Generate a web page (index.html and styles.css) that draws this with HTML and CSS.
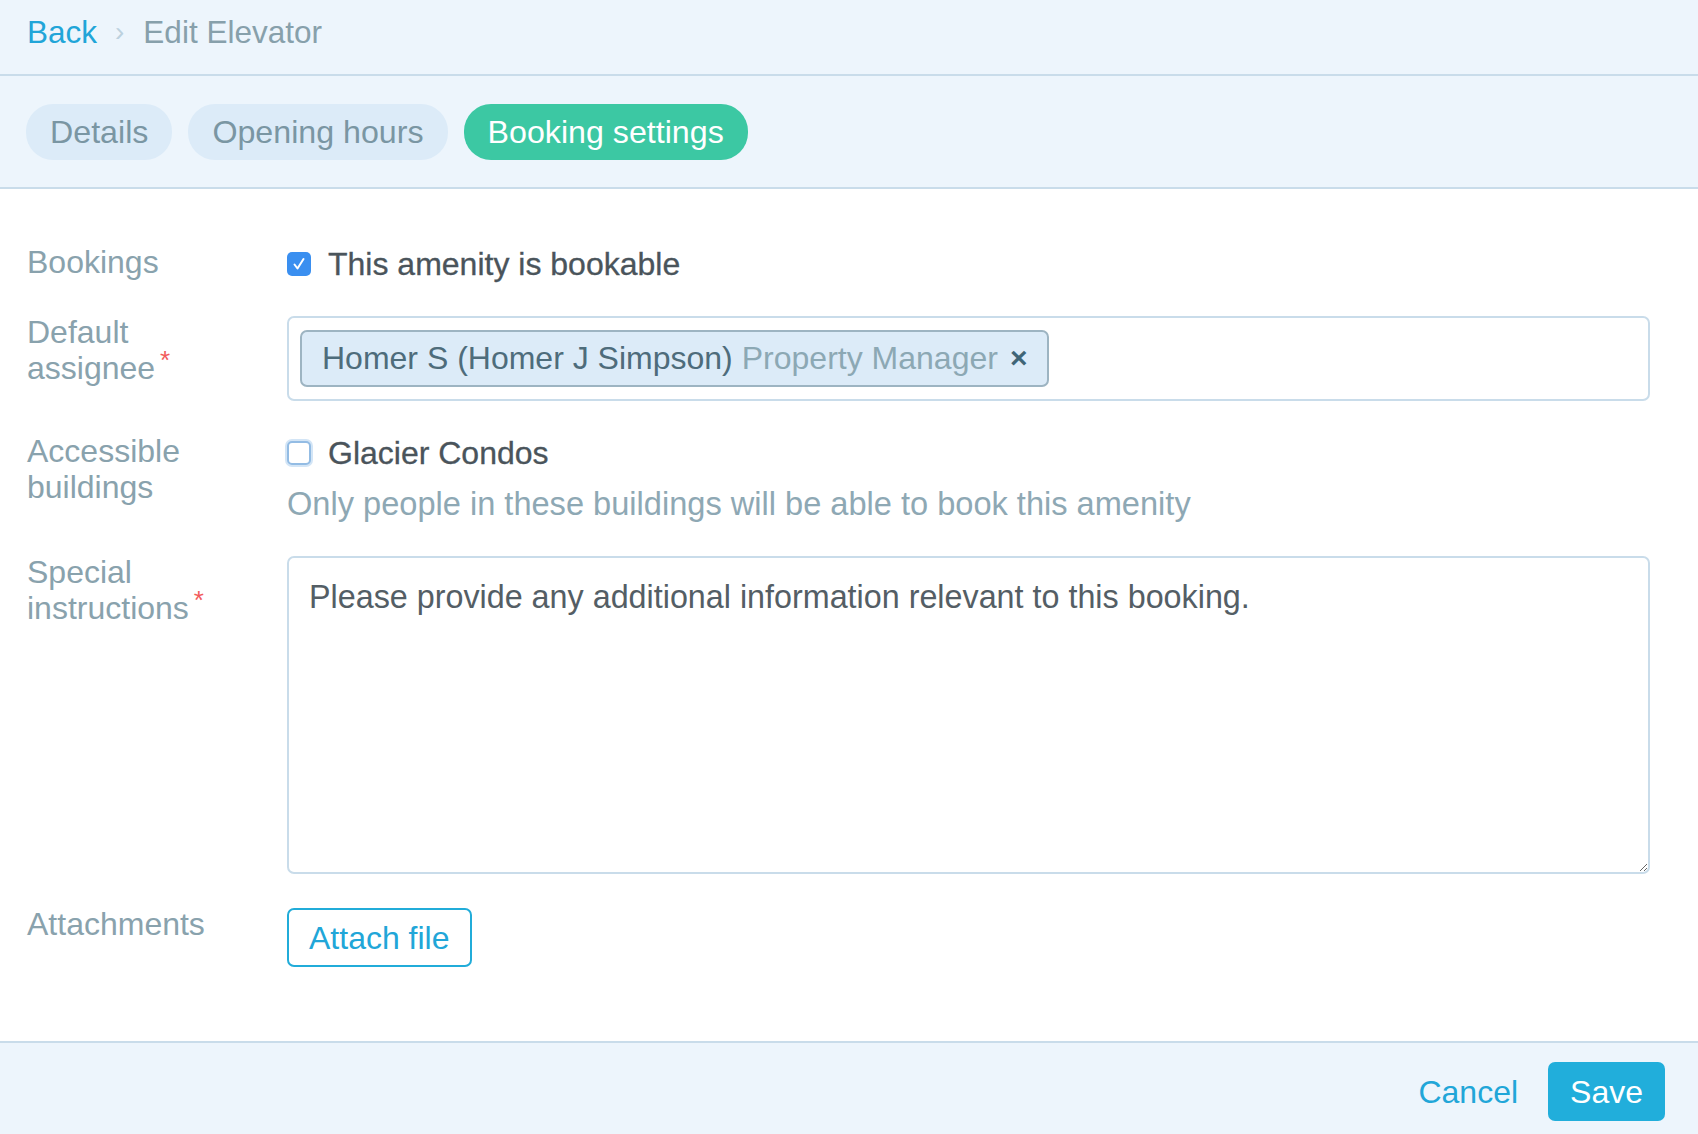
FILE: index.html
```html
<!DOCTYPE html>
<html lang="en">
<head>
<meta charset="utf-8">
<title>Edit Elevator</title>
<link rel="stylesheet" href="styles.css">
</head>
<body>
<div class="page">
  <header class="crumbs">
    <a class="crumb-back" href="#">Back</a>
    <span class="crumb-sep">›</span>
    <span class="crumb-title">Edit Elevator</span>
  </header>

  <nav class="tabs">
    <span class="tab">Details</span>
    <span class="tab">Opening hours</span>
    <span class="tab tab-active">Booking settings</span>
  </nav>

  <main class="form">
    <div class="label">Bookings</div>
    <div class="control">
      <div class="check">
        <span class="box box-checked">
          <svg viewBox="0 0 24 24" width="24" height="24"><path d="M7.5 12.5 L10.5 16.5 L16.5 7" fill="none" stroke="#fff" stroke-width="2" stroke-linecap="round" stroke-linejoin="round"/></svg>
        </span>
        <span class="check-text">This amenity is bookable</span>
      </div>
    </div>

    <div class="label">Default<br>assignee<span class="req">*</span></div>
    <div class="control">
      <div class="token-input">
        <span class="token">
          <span class="token-name">Homer S (Homer J Simpson)</span>
          <span class="token-role">Property Manager</span>
          <span class="token-x">×</span>
        </span>
      </div>
    </div>

    <div class="label">Accessible<br>buildings</div>
    <div class="control">
      <div class="check">
        <span class="box box-empty"></span>
        <span class="check-text">Glacier Condos</span>
      </div>
      <p class="help">Only people in these buildings will be able to book this amenity</p>
    </div>

    <div class="label">Special<br>instructions<span class="req">*</span></div>
    <div class="control">
      <textarea class="textarea">Please provide any additional information relevant to this booking.</textarea>
    </div>

    <div class="label">Attachments</div>
    <div class="control">
      <button class="btn-outline" type="button">Attach file</button>
    </div>
  </main>

  <footer class="actions">
    <a class="cancel" href="#">Cancel</a>
    <button class="btn-save" type="button">Save</button>
  </footer>
</div>
</body>
</html>
```
FILE: styles.css
```css
* { box-sizing: border-box; }

html, body {
  margin: 0;
  padding: 0;
  height: 100%;
}

body {
  font-family: "Liberation Sans", Arial, Helvetica, sans-serif;
  font-size: 32px;
  line-height: 36px;
  color: #4b555c;
  background: #ffffff;
}

.page {
  min-height: 100vh;
  display: flex;
  flex-direction: column;
}

/* Breadcrumb header */
.crumbs {
  height: 76px;
  background: #edf5fc;
  border-bottom: 2px solid #c9dcea;
  padding: 14px 27px 0;
  display: flex;
  align-items: flex-start;
  white-space: nowrap;
  font-size: 31.5px;
}

.crumb-back {
  color: #21a5d8;
  text-decoration: none;
}

.crumb-sep {
  color: #bcd1de;
  margin: 0 19px 0 18px;
  font-size: 28px;
}

.crumb-title {
  color: #87a0ab;
}

/* Tabs */
.tabs {
  background: #edf5fc;
  border-bottom: 2px solid #c9dcea;
  padding: 28px 26px 27px;
  display: flex;
  gap: 16px;
}

.tab {
  background: #dcebf8;
  color: #7a96a3;
  border-radius: 27px;
  padding: 10px 24px;
  font-size: 32.2px;
  white-space: nowrap;
}

.tab-active {
  background: #3cc8a3;
  color: #ffffff;
}

/* Form */
.form {
  flex: 1;
  display: grid;
  grid-template-columns: 260px 1363px;
  row-gap: 34px;
  align-content: start;
  padding: 57px 0 0 27px;
}

.label {
  color: #89a2ad;
  margin-top: -2px;
}

.req {
  color: #f25c5c;
  font-size: 26px;
  position: relative;
  top: -10px;
  margin-left: 5px;
}

.control {
  min-width: 0;
}

.check {
  display: flex;
  align-items: center;
  height: 36px;
  gap: 17px;
}

.box {
  width: 24px;
  height: 24px;
  border-radius: 5px;
  flex: none;
  display: flex;
  align-items: center;
  justify-content: center;
}

.box-checked {
  background: #3a8ff0;
}

.box-empty {
  background: #ffffff;
  border: 2px solid #93bce4;
  box-shadow: 0 0 0 2px #d3e5f6;
}

.check-text {
  color: #4a545b;
  -webkit-text-stroke: 0.3px #4a545b;
}

.help {
  margin: 15px 0 0;
  color: #8ea8b4;
  font-size: 32.6px;
}

/* Token input */
.token-input {
  border: 2px solid #c9dcea;
  border-radius: 7px;
  padding: 11.5px 11px 12.5px;
  background: #ffffff;
  display: flex;
}

.token {
  display: inline-flex;
  align-items: center;
  background: #dcebf8;
  border: 2px solid #9db4c2;
  border-radius: 7px;
  padding: 8.5px 20px;
  white-space: nowrap;
}

.token-name {
  color: #4e6c7b;
}

.token-role {
  color: #8ca8b4;
  margin-left: 9px;
}

.token-x {
  color: #3f6577;
  font-weight: bold;
  font-size: 30px;
  margin-left: 12px;
}

/* Textarea */
.textarea {
  display: block;
  width: 100%;
  height: 318px;
  border: 2px solid #c9dcea;
  border-radius: 7px;
  padding: 21px 20px;
  font-family: inherit;
  font-size: 32.3px;
  line-height: 36px;
  color: #545e65;
  resize: vertical;
  outline: none;
}

/* Buttons */
.btn-outline {
  font-family: inherit;
  font-size: 32px;
  line-height: 36px;
  color: #21a6d8;
  background: #ffffff;
  border: 2px solid #21acd9;
  border-radius: 7px;
  padding: 9.5px 20px;
  cursor: pointer;
}

.actions {
  background: #edf5fc;
  border-top: 2px solid #c9dcea;
  padding: 19px 33px 13px;
  display: flex;
  justify-content: flex-end;
  align-items: center;
  gap: 30px;
}

.cancel {
  color: #21a6d8;
  text-decoration: none;
}

.btn-save {
  font-family: inherit;
  font-size: 32px;
  line-height: 36px;
  color: #ffffff;
  background: #21aedb;
  border: none;
  border-radius: 7px;
  padding: 11.5px 22px;
  cursor: pointer;
}
```
